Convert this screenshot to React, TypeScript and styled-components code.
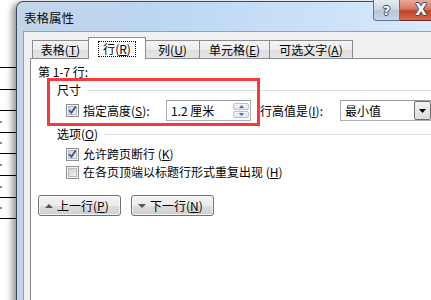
import styled, { createGlobalStyle } from "styled-components";

const GlobalStyle = createGlobalStyle`
  html, body {
    margin: 0;
    padding: 0;
    background: #fff;
  }
  body {
    font-family: "Noto Sans CJK SC", "Noto Sans", sans-serif;
    font-size: 12px;
    color: #000;
  }
  * {
    box-sizing: border-box;
  }
`;

const Screen = styled.div`
  width: 431px;
  height: 300px;
  overflow: hidden;
  display: flex;
  background: #fff;
`;

const DocStrip = styled.div`
  width: 16px;
  flex: none;
  padding-top: 67px;
  display: flex;
  flex-direction: column;
`;

const DocRow = styled.div<{ $h: number; $first?: boolean; $mark?: boolean }>`
  height: ${({ $h, $first }) => $h + 1 + ($first ? 1 : 0)}px;
  border-bottom: 1px solid #000;
  border-top: ${({ $first }) => ($first ? "1px solid #000" : "none")};
  display: flex;
  align-items: center;
  &::before {
    content: "";
    display: ${({ $mark }) => ($mark ? "block" : "none")};
    width: 2px;
    height: 2px;
    background: #8a8a8a;
  }
`;

const Dialog = styled.div`
  width: 440px;
  height: 330px;
  flex: none;
  margin-top: 1px;
  display: flex;
  flex-direction: column;
  border: 1px solid #3c4a5c;
  border-bottom: none;
  border-radius: 7px 7px 0 0;
  padding: 0 6px;
  background: linear-gradient(
    to right,
    #c2d5e9 0%,
    #bcd6f1 30%,
    #c9e0f8 65%,
    #dcebfb 100%
  );
  box-shadow: -4px 2px 6px rgba(0, 0, 0, 0.4);
`;

const TitleBar = styled.div`
  height: 29px;
  flex: none;
  display: flex;
  align-items: flex-start;
`;

const Title = styled.div`
  padding: 9px 0 0 1px;
  font-size: 12.5px;
  line-height: 14px;
  color: #0c0c0c;
`;

const CaptionButtons = styled.div`
  margin: -2px 6px 0 auto;
  display: flex;
`;

const CaptionButton = styled.div<{ $close?: boolean }>`
  width: ${({ $close }) => ($close ? 43 : 27)}px;
  height: 21px;
  display: flex;
  align-items: center;
  justify-content: center;
  border: 1px solid ${({ $close }) => ($close ? "#6b2a22" : "#61738a")};
  border-top: none;
  border-left-width: ${({ $close }) => ($close ? 0 : 1)}px;
  border-radius: ${({ $close }) => ($close ? "0 0 4px 0" : "0 0 0 4px")};
  background: ${({ $close }) =>
    $close
      ? "linear-gradient(#e9a99b 0%, #d8745f 45%, #c2422b 55%, #d46a4c 100%)"
      : "linear-gradient(#e4ebf3 0%, #cdd8e4 45%, #b7c5d5 55%, #c8d6e6 100%)"};
  font-family: "DejaVu Sans", sans-serif;
  font-weight: bold;
  font-size: ${({ $close }) => ($close ? 15 : 13)}px;
  line-height: 1;
  color: #fff;
  text-shadow: 1px 0 0 #3a4658, -1px 0 0 #3a4658, 0 1px 0 #3a4658,
    0 -1px 0 #3a4658;
`;

const Client = styled.div`
  flex: 1;
  display: flex;
  flex-direction: column;
  background: #f0f0f0;
  border: 1px solid #8fa3b8;
  border-bottom: none;
  padding: 5px 0 0 6px;
`;

const TabStrip = styled.div`
  height: 21px;
  flex: none;
  display: flex;
  align-items: flex-end;
  padding-left: 2px;
`;

const Tab = styled.div<{ $w: number; $active?: boolean }>`
  width: ${({ $w }) => $w}px;
  height: ${({ $active }) => ($active ? 22 : 18)}px;
  margin-left: -1px;
  margin-bottom: ${({ $active }) => ($active ? -1 : 0)}px;
  position: relative;
  z-index: ${({ $active }) => ($active ? 1 : 0)};
  border: 1px solid #898c95;
  border-bottom: none;
  background: ${({ $active }) =>
    $active ? "#fff" : "linear-gradient(#f4f4f4 0%, #ebebeb 50%, #dedede 51%, #e4e4e4 100%)"};
  display: flex;
  justify-content: center;
  align-items: ${({ $active }) => ($active ? "flex-start" : "center")};
  padding-top: ${({ $active }) => ($active ? 4 : 0)}px;
  line-height: 14px;
  white-space: nowrap;
  &:first-child {
    margin-left: 0;
  }
`;

const FocusLabel = styled.span`
  outline: 1px dotted #000;
  padding: 0 4px;
  line-height: 14px;
`;

const Panel = styled.div`
  flex: 1;
  position: relative;
  background: #fff;
  border: 1px solid #898c95;
  border-right: none;
  border-bottom: none;
  padding: 6px 0 0 7px;
  line-height: 14px;
`;

const Annotation = styled.div`
  position: absolute;
  left: 16px;
  top: 19px;
  width: 213px;
  height: 48px;
  border: 3px solid #f7393d;
  pointer-events: none;
`;

const Group = styled.div<{ $top: number }>`
  margin: ${({ $top }) => $top}px 0 0 19px;
`;

const GroupHeader = styled.div`
  display: flex;
  align-items: center;
  gap: 6px;
  height: 14px;
  &::after {
    content: "";
    flex: 1;
    height: 1px;
    margin-top: 1px;
    background: #d5dfe5;
    box-shadow: 0 1px 0 #fff;
  }
`;

const FieldRow = styled.div`
  margin: 3px 0 0 9px;
  height: 21px;
  display: flex;
  align-items: center;
`;

const CheckRow = styled.div<{ $top?: number }>`
  margin: ${({ $top }) => $top ?? 0}px 0 0 9px;
  height: 18px;
  display: flex;
  align-items: center;
  gap: 4px;
  white-space: nowrap;
`;

const Label = styled.span<{ $w?: number; $gap?: number }>`
  width: ${({ $w }) => ($w ? `${$w}px` : "auto")};
  margin-left: ${({ $gap }) => $gap ?? 0}px;
  flex: none;
  white-space: nowrap;
`;

const TextBox = styled.div<{ $w: number }>`
  width: ${({ $w }) => $w}px;
  height: 21px;
  flex: none;
  display: flex;
  align-items: center;
  border: 1px solid #abadb3;
  border-top-color: #9a9ca3;
  background: #fff;
  padding: 1px 1px 1px 4px;
`;

const BoxText = styled.span`
  flex: 1;
  white-space: nowrap;
`;

const Spin = styled.div`
  width: 16px;
  height: 15px;
  display: flex;
  flex-direction: column;
  gap: 1px;
`;

const SpinPart = styled.div`
  flex: 1;
  display: flex;
  align-items: center;
  justify-content: center;
  border: 1px solid #b6c3d4;
  border-radius: 2px;
  background: linear-gradient(#f3f6fa, #dfe6ee);
`;

const DropButton = styled.div`
  width: 17px;
  height: 19px;
  margin-right: -1px;
  display: flex;
  align-items: center;
  justify-content: center;
  border: 1px solid #6f6f6f;
  border-radius: 2px;
  background: linear-gradient(#f4f4f4, #dcdcdc);
`;

const ButtonRow = styled.div`
  margin-top: 14px;
  display: flex;
  gap: 10px;
`;

const PushButton = styled.div`
  width: 83px;
  height: 21px;
  display: flex;
  align-items: center;
  gap: 4px;
  padding-left: 6px;
  border: 1px solid #707070;
  border-radius: 3px;
  background: linear-gradient(#f3f3f3 0%, #ebebeb 50%, #dddddd 51%, #cfcfcf 100%);
  box-shadow: inset 0 0 0 1px rgba(255, 255, 255, 0.7);
  white-space: nowrap;
`;

function Mn({ k }: { k: string }) {
  return (
    <>
      (<u>{k}</u>)
    </>
  );
}

function CheckBox({ checked }: { checked?: boolean }) {
  return (
    <svg width="13" height="13" viewBox="0 0 13 13" style={{ flex: "none" }}>
      <defs>
        <linearGradient id="cbg" x1="0" y1="0" x2="1" y2="1">
          <stop offset="0" stopColor="#cbcfd5" />
          <stop offset="1" stopColor="#f6f6f6" />
        </linearGradient>
      </defs>
      <rect x="0.5" y="0.5" width="12" height="12" fill="#f4f4f4" stroke="#8e8f8f" />
      <rect x="2.5" y="2.5" width="8" height="8" fill="url(#cbg)" stroke="#b9bdc3" />
      {checked && (
        <path d="M3.2 6.2 L5.4 8.8 L9.8 2.6" fill="none" stroke="#3b5592" strokeWidth="1.8" />
      )}
    </svg>
  );
}

function Triangle({ up, color, w = 7 }: { up?: boolean; color: string; w?: number }) {
  const h = Math.ceil(w / 2);
  return (
    <svg width={w} height={h} viewBox={`0 0 ${w} ${h}`} style={{ display: "block" }}>
      <polygon
        points={up ? `0,${h} ${w},${h} ${w / 2},0` : `0,0 ${w},0 ${w / 2},${h}`}
        fill={color}
      />
    </svg>
  );
}

const docRows = [
  { h: 21, mark: false },
  { h: 20, mark: false },
  { h: 21, mark: true },
  { h: 20, mark: true },
  { h: 21, mark: true },
  { h: 21, mark: true },
  { h: 20, mark: true },
];

const tabs = [
  { label: "表格", key: "T", w: 57 },
  { label: "行", key: "R", w: 58, active: true },
  { label: "列", key: "U", w: 55 },
  { label: "单元格", key: "E", w: 71 },
  { label: "可选文字", key: "A", w: 84 },
];

export default function App() {
  return (
    <Screen>
      <GlobalStyle />
      <DocStrip>
        {docRows.map((row, i) => (
          <DocRow key={i} $h={row.h} $first={i === 0} $mark={row.mark} />
        ))}
      </DocStrip>
      <Dialog>
        <TitleBar>
          <Title>表格属性</Title>
          <CaptionButtons>
            <CaptionButton>?</CaptionButton>
            <CaptionButton $close>X</CaptionButton>
          </CaptionButtons>
        </TitleBar>
        <Client>
          <TabStrip>
            {tabs.map((tab) => (
              <Tab key={tab.key} $w={tab.w} $active={tab.active}>
                {tab.active ? (
                  <FocusLabel>
                    {tab.label}
                    <Mn k={tab.key} />
                  </FocusLabel>
                ) : (
                  <span>
                    {tab.label}
                    <Mn k={tab.key} />
                  </span>
                )}
              </Tab>
            ))}
          </TabStrip>
          <Panel>
            <div>第 1-7 行:</div>
            <Group $top={4}>
              <GroupHeader>尺寸</GroupHeader>
              <FieldRow>
                <CheckBox checked />
                <Label $w={83} $gap={4}>
                  指定高度<Mn k="S" />:
                </Label>
                <TextBox $w={85}>
                  <BoxText>1.2 厘米</BoxText>
                  <Spin>
                    <SpinPart>
                      <Triangle up color="#4c6a9c" w={5} />
                    </SpinPart>
                    <SpinPart>
                      <Triangle color="#4c6a9c" w={5} />
                    </SpinPart>
                  </Spin>
                </TextBox>
                <Label $w={80} $gap={9}>
                  行高值是<Mn k="I" />:
                </Label>
                <TextBox $w={92}>
                  <BoxText>最小值</BoxText>
                  <DropButton>
                    <Triangle color="#000" w={7} />
                  </DropButton>
                </TextBox>
              </FieldRow>
            </Group>
            <Group $top={6}>
              <GroupHeader>
                <span>
                  选项<Mn k="O" />
                </span>
              </GroupHeader>
              <CheckRow $top={4}>
                <CheckBox checked />
                <span>
                  允许跨页断行 <Mn k="K" />
                </span>
              </CheckRow>
              <CheckRow>
                <CheckBox />
                <span>
                  在各页顶端以标题行形式重复出现 <Mn k="H" />
                </span>
              </CheckRow>
            </Group>
            <ButtonRow>
              <PushButton>
                <Triangle up color="#555" w={8} />
                <span>
                  上一行<Mn k="P" />
                </span>
              </PushButton>
              <PushButton>
                <Triangle color="#555" w={8} />
                <span>
                  下一行<Mn k="N" />
                </span>
              </PushButton>
            </ButtonRow>
            <Annotation />
          </Panel>
        </Client>
      </Dialog>
    </Screen>
  );
}
